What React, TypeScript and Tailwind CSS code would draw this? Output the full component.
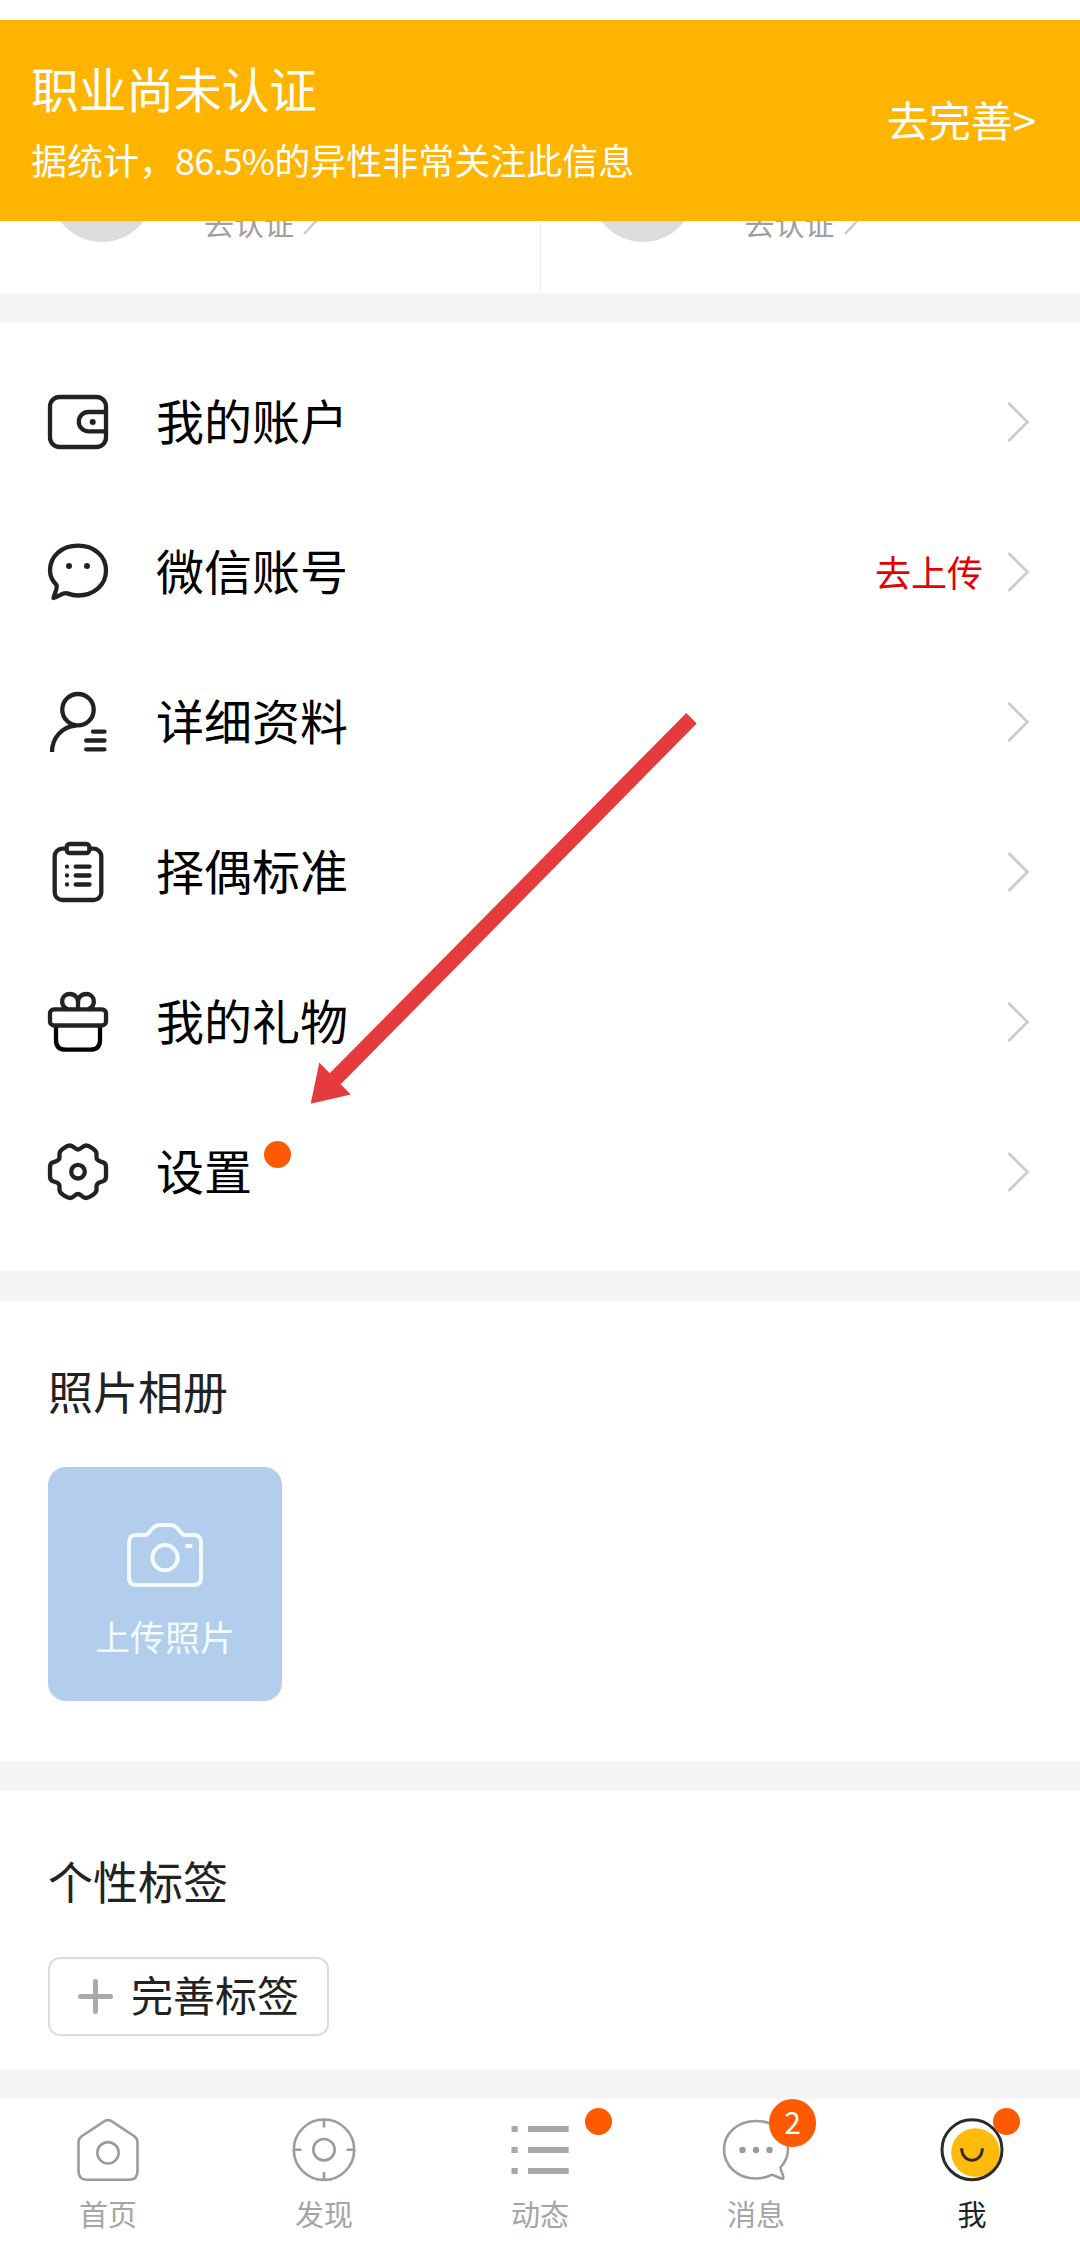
import React from "react";

type IconProps = { children: React.ReactNode };

// Ícones do menu, 60x60
function MenuIcon({ children }: IconProps) {
    return (
        <svg
            className="h-[60px] w-[60px] shrink-0 overflow-visible"
            viewBox="0 0 60 60"
            fill="none"
            stroke="#222222"
            strokeWidth="4.3"
            strokeLinecap="round"
            strokeLinejoin="round"
        >
            {children}
        </svg>
    );
}

function TabIcon({ children }: IconProps) {
    return (
        <svg
            className="h-16 w-16 shrink-0 overflow-visible"
            viewBox="0 0 64 64"
            fill="none"
            stroke="#9c9c9c"
            strokeWidth="2.6"
            strokeLinejoin="round"
        >
            {children}
        </svg>
    );
}

function Chevron() {
    return (
        <svg className="h-10 w-6" viewBox="0 0 24 40" fill="none" stroke="#cccccc" strokeWidth="2.8">
            <path d="M1.5 1L20.5 20L1.5 39" />
        </svg>
    );
}

const menu = [
    {
        label: "我的账户",
        icon: (
            <MenuIcon>
                <rect x="2" y="5" width="56" height="50" rx="9.5" />
                <path d="M58 20H40.5a9.7 9.7 0 0 0 0 19.4H58" />
                <circle cx="44.7" cy="30" r="3" fill="#222222" stroke="none" />
            </MenuIcon>
        ),
    },
    {
        label: "微信账号",
        action: "去上传",
        icon: (
            <MenuIcon>
                <path d="M8.5 43C4.5 39 2 34 2 28.5C2 14 14 3.7 30 3.7S58 14 58 28.5S46 53.5 30 53.5C25 53.5 21.5 52.2 19 51.3C15 50.2 11 54.5 5.5 56C6 52.5 9.8 47 8.5 43Z" />
                <circle cx="21" cy="24" r="3" fill="#222222" stroke="none" />
                <circle cx="39" cy="24" r="3" fill="#222222" stroke="none" />
            </MenuIcon>
        ),
    },
    {
        label: "详细资料",
        icon: (
            <MenuIcon>
                <circle cx="30" cy="17.7" r="15.7" />
                <path d="M4 60C4 46 14 34.5 28 33.6" strokeLinecap="butt" />
                <path d="M45 39.7H56.5M38.2 48.5H56.5M38.2 57.3H56.5" />
            </MenuIcon>
        ),
    },
    {
        label: "择偶标准",
        icon: (
            <MenuIcon>
                <rect x="6.7" y="6.7" width="46.6" height="51.3" rx="7.5" />
                <rect x="18.7" y="2" width="22.6" height="9" rx="3" fill="#ffffff" />
                <path d="M19 24.7H19.01M19 33.5H19.01M19 42.5H19.01M27.7 24.7H41.5M27.7 33.5H41.5M27.7 42.5H41.5" />
            </MenuIcon>
        ),
    },
    {
        label: "我的礼物",
        icon: (
            <MenuIcon>
                <path d="M8 34V48Q8 57.7 17.5 57.7H42.5Q52 57.7 52 48V34" stroke="#000000" />
                <path d="M19 17C11.5 13 13 2 21.8 2C27 2 30 6 30 10V17M30 10C30 6 33 2 38.2 2C47 2 48.5 13 41 17" />
                <rect x="2" y="17.3" width="56" height="16.2" rx="4" />
            </MenuIcon>
        ),
    },
    {
        label: "设置",
        dot: true,
        icon: (
            <MenuIcon>
                <path d="M30 7.5C33 7.5 34.5 3.500 38 3.500C41 3.500 48.500 8 48.500 11.500V15.500C48.500 19 52 19.300 55 20.300C57.500 21.300 58 23 58 25V34.500C58 36.500 57.500 38.300 55 39.300C52 40.300 48.500 40.500 48.500 44V48C48.500 51.500 41 56 38 56C34.500 56 33 52 30 52C27 52 25.500 56 22 56C19 56 11.500 51.500 11.500 48V44C11.500 40.500 8 40.300 5 39.300C2.500 38.300 2 36.500 2 34.500V25C2 23 2.500 21.300 5 20.300C8 19.300 11.500 19 11.500 15.500V11.500C11.500 8 19 3.500 22 3.500C25.500 3.500 27 7.500 30 7.500Z" />
                <circle cx="30" cy="29.7" r="6.8" />
            </MenuIcon>
        ),
    },
];

const tabs = [
    {
        label: "首页",
        icon: (
            <TabIcon>
                <path d="M28.5 3.2Q32 1 35.5 3.2L58 18Q61.5 20.5 61.5 24V53Q61.5 61.8 53 61.8H11Q2.5 61.8 2.5 53V24Q2.5 20.5 6 18Z" />
                <circle cx="32" cy="34.8" r="10.7" />
            </TabIcon>
        ),
    },
    {
        label: "发现",
        icon: (
            <TabIcon>
                <circle cx="32" cy="31.7" r="30.2" />
                <circle cx="32" cy="31.7" r="10.7" />
                <path d="M32 1.5V9.5M32 54V62M1.8 31.7H9.5M54.5 31.7H62.2" />
            </TabIcon>
        ),
    },
    {
        label: "动态",
        badge: <span className="absolute left-[153px] top-[9px] h-[27px] w-[27px] rounded-full bg-[#ff5a00]"></span>,
        icon: (
            <TabIcon>
                <path
                    d="M3.5 11H9.7M20 11H60.7M3.5 32H9.7M20 32H60.7M3.5 53H9.7M20 53H60.7"
                    stroke="#a8a8a8"
                    strokeWidth="6"
                />
            </TabIcon>
        ),
    },
    {
        label: "消息",
        badge: (
            <span className="absolute left-[121px] top-0 flex h-12 w-[47px] items-center justify-center rounded-full bg-[#ff5a00] pb-1 text-[30px] leading-none text-white">
                2
            </span>
        ),
        icon: (
            <TabIcon>
                <path d="M56.5 49.5C61 44.5 64 38.5 64 31.5C64 15 50 3 32 3S0 15 0 31.5S14 60.5 32 60.5C38 60.5 43 59 47.5 56.8C50 57 54 60 59 60.7C61 58 56 53 56.5 49.5Z" />
                <g fill="#9c9c9c" stroke="none">
                    <circle cx="18.5" cy="32" r="3.2" />
                    <circle cx="32" cy="32" r="3.2" />
                    <circle cx="45.5" cy="32" r="3.2" />
                </g>
            </TabIcon>
        ),
    },
    {
        label: "我",
        active: true,
        badge: <span className="absolute left-[129px] top-[9px] h-[27px] w-[27px] rounded-full bg-[#ff5a00]"></span>,
        icon: (
            <TabIcon>
                <circle cx="35.5" cy="34.5" r="24.3" fill="#ffbb0c" stroke="none" />
                <circle cx="32" cy="31.7" r="30" stroke="#2b2b2b" strokeWidth="3" />
                <path d="M21.7 30.3C21.7 46.2 42.3 46.2 42.3 30.3" stroke="#3a2a10" strokeWidth="3" />
            </TabIcon>
        ),
    },
];

function CertCard() {
    return (
        <div className="flex flex-1 items-end pb-[51px] pl-[50px]">
            <div className="h-[104px] w-[104px] rounded-full bg-[#dcdcdc]"></div>
            <div className="ml-[50px] flex items-center pb-0.5 text-[30px] leading-[36px] text-[#a0a0a0]">
                去认证
                <svg className="ml-2 h-8 w-4" viewBox="0 0 16 32" fill="none" stroke="#cccccc" strokeWidth="2.5">
                    <path d="M2 2L14 15L2 28" />
                </svg>
            </div>
        </div>
    );
}

export default function ProfilePage() {
    return (
        <div className="relative flex h-[2248px] w-[1080px] flex-col overflow-hidden bg-white font-['Noto_Sans_CJK_SC',sans-serif] text-black">
            {/* Aviso fixo sobre o conteúdo */}
            <header className="absolute inset-x-0 top-5 z-10 flex h-[201px] items-center justify-between bg-[#ffb400] pl-[31px] pr-[44px] text-white">
                <div className="pt-1">
                    <h1 className="text-[48px] leading-[72px] tracking-[-0.4px]">职业尚未认证</h1>
                    <p className="text-[36px] leading-[72px]">
                        据统计，<span className="tracking-[-0.8px]">86.5%</span>的异性非常关注此信息
                    </p>
                </div>
                <a className="pb-1 text-[42px]">去完善&gt;</a>
            </header>

            <section className="flex h-[293px] shrink-0 items-end">
                <CertCard />
                <div className="h-[92px] w-px bg-[#ececec]"></div>
                <CertCard />
            </section>

            <div className="h-[30px] shrink-0 bg-[#f5f5f5]"></div>

            {/* Menu */}
            <nav className="relative py-6">
                {menu.map((item) => (
                    <div key={item.label} className="flex h-[150px] items-center pl-12 pr-[49px]">
                        {item.icon}
                        <span className="ml-12 pb-[7px] text-[48px] leading-[72px]">{item.label}</span>
                        {item.dot && <span className="mb-9 ml-[12px] h-[27px] w-[27px] rounded-full bg-[#ff5a00]"></span>}
                        <div className="ml-auto flex items-center">
                            {item.action && <span className="mr-6 pb-0.5 text-[36px] text-[#e60000]">{item.action}</span>}
                            <Chevron />
                        </div>
                    </div>
                ))}
                <svg className="absolute left-[310px] top-[389px] h-[392px] w-[388px]" viewBox="0 0 388 392" fill="#e53b3c">
                    <path d="M0.7 391.7L9.3 350.5L19.7 361.3L376.3 1L386.7 11.5L30.7 372.3L40.7 382.5Z" />
                </svg>
            </nav>

            <div className="h-[30px] shrink-0 bg-[#f5f5f5]"></div>

            {/* Álbum de fotos */}
            <section className="h-[460px] shrink-0 px-12 pt-[60px]">
                <h2 className="text-[45px] leading-[60px] text-[#222222]">照片相册</h2>
                <button className="mt-[46px] flex h-[234px] w-[234px] flex-col items-center rounded-[18px] bg-[#b2ceec] pt-14 text-[#f4fbff]">
                    <svg
                        className="h-16 w-[76px]"
                        viewBox="0 0 76 64"
                        fill="none"
                        stroke="currentColor"
                        strokeWidth="4"
                        strokeLinejoin="round"
                    >
                        <path d="M9.5 12H18C24 12 23 2 33 2H43C53 2 52 12 58 12H66.5Q74 12 74 19.5V54.5Q74 62 66.5 62H9.5Q2 62 2 54.5V19.5Q2 12 9.5 12Z" />
                        <circle cx="38" cy="34.7" r="12.6" />
                        <path d="M58.5 23H65.3" />
                    </svg>
                    <span className="mt-[25px] text-[35px] leading-[48px]">上传照片</span>
                </button>
            </section>

            <div className="h-[30px] shrink-0 bg-[#f5f5f5]"></div>

            {/* Etiquetas */}
            <section className="h-[278px] shrink-0 px-12 pt-[60px]">
                <h2 className="text-[45px] leading-[60px] text-[#222222]">个性标签</h2>
                <button className="mt-[46px] flex h-[79px] w-[281px] items-center rounded-[12px] border-2 border-[#dcdcdc] pl-7 text-[#222222]">
                    <svg className="h-[35px] w-[35px]" viewBox="0 0 35 35" stroke="#aaaaaa" strokeWidth="5" strokeLinecap="round">
                        <path d="M17.5 2.5V32.5M2.5 17.5H32.5" />
                    </svg>
                    <span className="ml-[18px] pb-1.5 text-[42px] leading-[60px]">完善标签</span>
                </button>
            </section>

            <div className="h-[30px] shrink-0 bg-[#f5f5f5]"></div>

            {/* Barra inferior */}
            <footer className="flex h-[149px] shrink-0">
                {tabs.map((tab) => (
                    <div key={tab.label} className="relative flex flex-1 flex-col items-center pt-[19px]">
                        {tab.icon}
                        {tab.badge}
                        <span className={tab.active ? "mt-[9px] text-[29px] leading-[44px] text-[#222222]" : "mt-[9px] text-[29px] leading-[44px] text-[#a5a5a5]"}>
                            {tab.label}
                        </span>
                    </div>
                ))}
            </footer>
        </div>
    );
}
